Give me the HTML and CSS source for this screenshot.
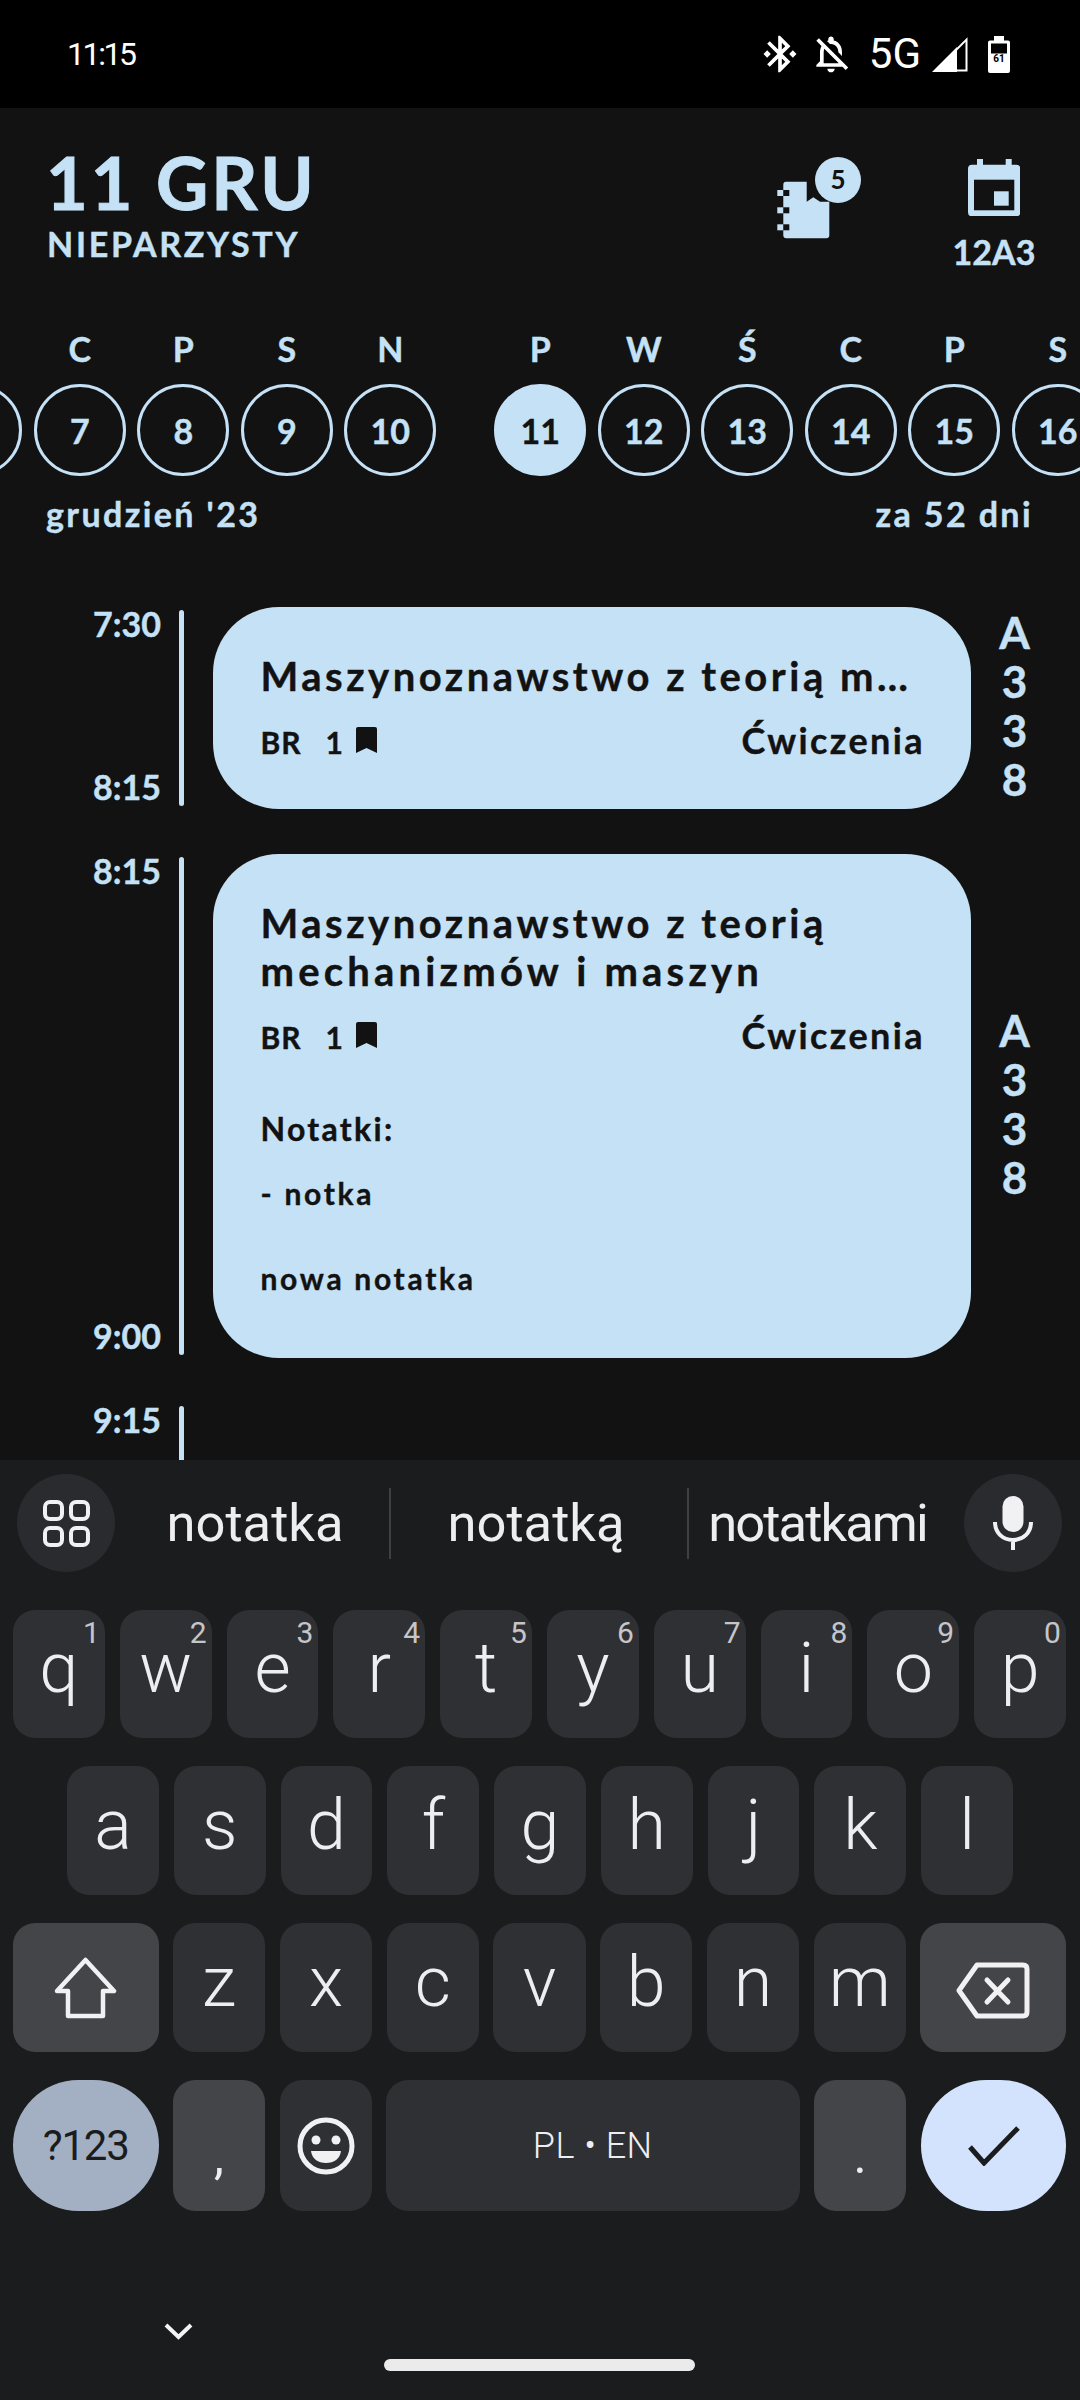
FILE: index.html
```html
<!DOCTYPE html>
<html lang="pl">
<head>
<meta charset="utf-8">
<title>Plan zajęć</title>
<link rel="stylesheet" href="styles.css">
</head>
<body>
<div class="status">
  <span class="clock">11:15</span>
  <div class="status-icons">
    <svg class="s-bt" viewBox="0 0 24 24"><path d="M7 12l-2-2-2 2 2 2 2-2zm10.71-4.29L12 2h-1v7.59L6.41 5 5 6.41 10.59 12 5 17.59 6.41 19 11 14.41V22h1l5.71-5.71-4.3-4.29 4.3-4.29zM13 5.83l1.88 1.88L13 9.59V5.83zm1.88 10.46L13 18.17v-3.76l1.88 1.88zM19 10l-2 2 2 2 2-2-2-2z"/></svg>
    <svg class="s-bell" viewBox="0 0 24 24"><path d="M12 22c1.1 0 2-.9 2-2h-4c0 1.1.9 2 2 2zm0-15.5c2.49 0 4 2.02 4 4.5v.1l2 2V11c0-3.07-1.63-5.64-4.5-6.32V4c0-.83-.67-1.5-1.5-1.5s-1.5.67-1.5 1.5v.68c-.24.06-.47.15-.69.23l1.64 1.64c.18-.02.36-.05.55-.05zM5.41 3.35L4 4.76l2.81 2.81C6.29 8.57 6 9.74 6 11v5l-2 2v1h14.24l1.74 1.74 1.41-1.41L5.41 3.35zM16 17H8v-6c0-.68.12-1.32.34-1.9L16 16.76V17z"/></svg>
    <span class="net">5G</span>
    <svg class="s-sig" viewBox="0 0 36 36"><path d="M0 36L25 11V36Z"/><path class="hollow" d="M34.5 3.6V34.5H3.6Z"/></svg>
    <svg class="s-bat" viewBox="0 0 22 37"><path d="M6 0H16V4.5H20Q22 4.5 22 6.500V35Q22 37 20 37H2Q0 37 0 35V6.500Q0 4.500 2 4.500H6Z"/><rect class="bat-hole" x="3" y="7.500" width="16" height="10"/><text class="bat-text" x="11" y="26">61</text></svg>
  </div>
</div>

<main class="app">
  <header class="head">
    <div class="head-left">
      <div class="date">11 GRU</div>
      <div class="parity">NIEPARZYSTY</div>
    </div>
    <svg class="notebook" viewBox="0 0 84 82">
      <path class="fill-l" d="M9 24.700H29.700V44.700L36.300 40.300L43 44.700H52.300V78.300Q52.300 81.300 49.300 81.300H9.300Q6.300 81.300 6.300 78.300V27.700Q6.300 24.700 9 24.700Z"/>
      <rect class="fill-l" x="0.300" y="33" width="6" height="6"/><rect class="fill-d" x="6.300" y="33" width="6" height="6"/>
      <rect class="fill-l" x="0.300" y="50.300" width="6" height="6"/><rect class="fill-d" x="6.300" y="50.300" width="6" height="6"/>
      <rect class="fill-l" x="0.300" y="67.300" width="6" height="6"/><rect class="fill-d" x="6.300" y="67.300" width="6" height="6"/>
      <circle class="fill-l" cx="61" cy="23" r="23"/>
      <text class="badge-num" x="61" y="32">5</text>
    </svg>
    <div class="plan">
      <svg class="cal" viewBox="0 0 52.300 57.300"><path class="fill-l" d="M9 0H15V5.700H37.700V0H43.700V5.700H48.300Q52.300 5.700 52.300 9.700V53.300Q52.300 57.300 48.300 57.300H4Q0 57.300 0 53.300V9.700Q0 5.700 4 5.700H9Z"/><rect class="fill-d" x="6" y="20.700" width="40.300" height="30.600"/><rect class="fill-l" x="26" y="32.300" width="14.700" height="14.400"/></svg>
      <div class="plan-name">12A3</div>
    </div>
  </header>

  <section class="strip">
    <div class="day"><span class="dl"></span><span class="dn"></span></div>
    <div class="day"><span class="dl">C</span><span class="dn">7</span></div>
    <div class="day"><span class="dl">P</span><span class="dn">8</span></div>
    <div class="day"><span class="dl">S</span><span class="dn">9</span></div>
    <div class="day week-end"><span class="dl">N</span><span class="dn">10</span></div>
    <div class="day"><span class="dl">P</span><span class="dn today">11</span></div>
    <div class="day"><span class="dl">W</span><span class="dn">12</span></div>
    <div class="day"><span class="dl">Ś</span><span class="dn">13</span></div>
    <div class="day"><span class="dl">C</span><span class="dn">14</span></div>
    <div class="day"><span class="dl">P</span><span class="dn">15</span></div>
    <div class="day"><span class="dl">S</span><span class="dn">16</span></div>
  </section>
  <div class="caption"><span>grudzień '23</span><span>za 52 dni</span></div>

  <section class="schedule">
    <div class="row">
      <div class="times"><span>7:30</span><span>8:15</span></div>
      <div class="rule"></div>
      <div class="card">
        <div class="title">Maszynoznawstwo z teorią m…</div>
        <div class="meta"><span class="tag">BR</span><span class="tag num">1</span><svg class="mark" viewBox="0 0 21 26"><path d="M2 0H19Q21 0 21 2V26L10.500 21L0 26V2Q0 0 2 0Z"/></svg><span class="kind">Ćwiczenia</span></div>
      </div>
      <div class="room">A<br>3<br>3<br>8</div>
    </div>
    <div class="row">
      <div class="times"><span>8:15</span><span>9:00</span></div>
      <div class="rule"></div>
      <div class="card card-open">
        <div class="title">Maszynoznawstwo z teorią<br><span class="title-wide">mechanizmów i maszyn</span></div>
        <div class="meta"><span class="tag">BR</span><span class="tag num">1</span><svg class="mark" viewBox="0 0 21 26"><path d="M2 0H19Q21 0 21 2V26L10.500 21L0 26V2Q0 0 2 0Z"/></svg><span class="kind">Ćwiczenia</span></div>
        <div class="notes-head">Notatki:</div>
        <div class="note first">- notka</div>
        <div class="note second">nowa notatka</div>
      </div>
      <div class="room">A<br>3<br>3<br>8</div>
    </div>
    <div class="row row-next">
      <div class="times"><span>9:15</span></div>
      <div class="rule"></div>
    </div>
  </section>
</main>

<div class="keyboard">
  <div class="suggest">
    <div class="round"><svg class="grid-ic" viewBox="0 0 47 47"><rect x="2" y="2" width="17" height="17" rx="5"/><rect x="28" y="2" width="17" height="17" rx="5"/><rect x="2" y="28" width="17" height="17" rx="5"/><rect x="28" y="28" width="17" height="17" rx="5"/></svg></div>
    <div class="word w1">notatka</div>
    <div class="word w2">notatką</div>
    <div class="word w3">notatkami</div>
    <div class="round"><svg class="mic-ic" viewBox="0 0 40 54"><rect class="mic-body" x="9.500" y="0" width="21" height="36" rx="10.500"/><path d="M2 26C2 37 10 44 20 44S38 37 38 26M20 44V54"/></svg></div>
  </div>
  <div class="krow r1">
    <div class="key">q<sup class="hint">1</sup></div><div class="key">w<sup class="hint">2</sup></div><div class="key">e<sup class="hint">3</sup></div><div class="key">r<sup class="hint">4</sup></div><div class="key">t<sup class="hint">5</sup></div><div class="key">y<sup class="hint">6</sup></div><div class="key">u<sup class="hint">7</sup></div><div class="key">i<sup class="hint">8</sup></div><div class="key">o<sup class="hint">9</sup></div><div class="key">p<sup class="hint">0</sup></div>
  </div>
  <div class="krow r2">
    <div class="key">a</div><div class="key">s</div><div class="key">d</div><div class="key">f</div><div class="key">g</div><div class="key">h</div><div class="key">j</div><div class="key">k</div><div class="key">l</div>
  </div>
  <div class="krow r3">
    <div class="key wide alt"><svg class="shift-ic" viewBox="0 0 63 62"><path d="M31.500 3L60 34H49V59H14V34H3Z"/></svg></div>
    <div class="key">z</div><div class="key">x</div><div class="key">c</div><div class="key">v</div><div class="key">b</div><div class="key">n</div><div class="key">m</div>
    <div class="key wide alt"><svg class="del-ic" viewBox="0 0 74 57"><path d="M21 3H67Q71 3 71 7V50Q71 54 67 54H21L3 28.500Z"/><path d="M31 18L52 40M52 18L31 40"/></svg></div>
  </div>
  <div class="krow r4">
    <div class="key wide pill sym">?123</div>
    <div class="key alt punct">,</div>
    <div class="key fixed"><svg class="emoji-ic" viewBox="0 0 58 58"><circle class="face" cx="29" cy="29" r="26"/><circle cx="19" cy="23" r="4.500"/><circle cx="39" cy="23" r="4.500"/><path d="M14 34H44C43 42 37 46 29 46S15 42 14 34Z"/></svg></div>
    <div class="key space">PL • EN</div>
    <div class="key alt punct">.</div>
    <div class="key wide pill enter"><svg class="check-ic" viewBox="0 0 52 40"><path d="M2 21L16 37L50 2"/></svg></div>
  </div>
  <svg class="chev" viewBox="0 0 29 17"><path d="M2 2L14.500 14L27 2"/></svg>
  <div class="home"></div>
</div>
</body>
</html>
```
FILE: styles.css
```css
* { box-sizing: border-box; }
html, body { margin: 0; padding: 0; }
body {
  width: 1080px;
  height: 2400px;
  overflow: hidden;
  background: #121212;
  font-family: "Lato", "Noto Sans", sans-serif;
  font-weight: 700;
  color: #c5e1f6;
}

/* status bar */
.status {
  height: 108px;
  background: #000;
  color: #fff;
  display: flex;
  justify-content: space-between;
  align-items: center;
  font-family: "Roboto", sans-serif;
  font-weight: 400;
  padding: 0 70px 0 67px;
}
.clock { font-size: 32px; letter-spacing: -2.400px; line-height: 1; }
.status-icons { display: flex; align-items: center; }
.status-icons svg { fill: #fff; display: block; }
.s-bt { width: 44px; height: 44px; margin-right: 7px; }
.s-bell { width: 44px; height: 44px; margin-right: 16px; }
.net { font-size: 42px; line-height: 1; margin-right: 11px; }
.s-sig { width: 36px; height: 36px; margin-right: 20px; }
.status-icons .hollow { fill: none; stroke: #fff; stroke-width: 2; }
.s-bat { width: 22px; height: 37px; }
.status-icons .bat-hole { fill: #000; }
.bat-text { font-size: 10px; fill: #000; text-anchor: middle; font-family: "Roboto", sans-serif; font-weight: 700; }

/* header */
.app { height: 1352px; overflow: hidden; -webkit-text-stroke: .4px currentColor; }
.head { display: flex; align-items: flex-start; padding: 44px 41px 0 46px; }
.head-left { flex: 1; }
.date { font-size: 72px; line-height: 60px; letter-spacing: 3px; -webkit-text-stroke: 1px currentColor; }
.parity { font-size: 34px; line-height: 64px; letter-spacing: 2.700px; margin-left: 1px; }
.fill-l { fill: #c5e1f6; }
.fill-d { fill: #121212; }
.notebook { width: 84px; height: 82px; margin: 5px 88px 0 0; display: block; }
.badge-num { font-size: 26px; font-weight: 700; fill: #121212; text-anchor: middle; }
.plan { width: 90px; display: flex; flex-direction: column; align-items: center; padding-top: 7px; }
.cal { width: 52.300px; height: 57.300px; display: block; }
.plan-name { font-size: 34px; line-height: 40px; margin-top: 16px; white-space: nowrap; }

/* day strip */
.strip { display: flex; gap: 11.500px; margin: 53px 0 0 -69.700px; width: 1180px; }
.day { width: 92px; flex: none; display: flex; flex-direction: column; align-items: center; }
.week-end { margin-right: 46.500px; }
.dl { font-size: 34px; line-height: 40px; min-height: 40px; margin-bottom: 15px; }
.dn {
  width: 92px;
  height: 92px;
  border: 3.500px solid #c5e1f6;
  border-radius: 50%;
  display: flex;
  align-items: center;
  justify-content: center;
  font-size: 34px;
}
.today { background: #c5e1f6; color: #121212; }
.caption {
  display: flex;
  justify-content: space-between;
  padding: 0 47px 0 46px;
  margin-top: 18px;
  font-size: 34px;
  line-height: 40px;
  letter-spacing: 2.400px;
}

/* schedule */
.schedule { margin-top: 73px; display: flex; flex-direction: column; gap: 45.500px; }
.row { display: flex; align-items: stretch; }
.row-next { min-height: 120px; }
.times {
  width: 161px;
  flex: none;
  display: flex;
  flex-direction: column;
  justify-content: space-between;
  align-items: flex-end;
  font-size: 34px;
  line-height: 34px;
  padding-bottom: 5px;
}
.rule { width: 5px; flex: none; margin: 3px 0 3px 18px; background: #c5e1f6; border-radius: 3px; }
.card {
  width: 758px;
  flex: none;
  margin-left: 29px;
  background: #c5e1f6;
  color: #121212;
  border-radius: 66px;
  padding: 45px 49px 46.500px 47.500px;
}
.card-open { padding-bottom: 60px; }
.title { font-size: 40px; line-height: 48px; letter-spacing: 3.500px; white-space: nowrap; }
.title-wide { letter-spacing: 4.200px; }
.meta { display: flex; align-items: baseline; margin-top: 18px; font-size: 30px; line-height: 44px; height: 44px; }
.tag { letter-spacing: 1px; }
.num { margin-left: 24px; }
.mark { width: 21px; height: 26px; fill: #121212; margin-left: 12px; align-self: center; display: block; }
.kind { margin-left: auto; font-size: 36px; letter-spacing: 2.400px; margin-right: -3px; }
.notes-head { font-size: 32px; line-height: 40px; margin-top: 51.500px; letter-spacing: 2.300px; }
.note { font-size: 30px; line-height: 40px; letter-spacing: 2.700px; }
.note.first { margin-top: 24px; }
.note.second { margin-top: 45px; }
.room { flex: 1; align-self: center; text-align: center; font-size: 44px; line-height: 49px; padding: 0 22px 4px 0; }

/* keyboard */
.keyboard {
  height: 940px;
  background: #1b1c1e;
  padding: 14px 14px 0 13px;
  color: #eeeef2;
  font-family: "Roboto", sans-serif;
  font-weight: 400;
}
.suggest { display: flex; height: 98px; margin: 0 5px 38px 4px; }
.round {
  width: 98px;
  height: 98px;
  flex: none;
  border-radius: 50%;
  background: #2a2b2f;
  display: flex;
  align-items: center;
  justify-content: center;
}
.grid-ic { width: 47px; height: 47px; fill: none; stroke: #f1f1f4; stroke-width: 4; }
.mic-ic { width: 40px; height: 54px; fill: none; stroke: #f1f1f4; stroke-width: 4; }
.mic-ic .mic-body { fill: #f1f1f4; stroke: none; }
.word {
  height: 98px;
  flex: none;
  display: flex;
  align-items: center;
  justify-content: center;
  font-size: 52.500px;
  line-height: 1;
}
.w1 { width: 274px; padding-left: 6px; }
.w2 { width: 298px; padding-right: 6px; border-left: 2px solid #3f4043; border-image: linear-gradient(#1b1c1e 15px, #3f4043 15px, #3f4043 84px, #1b1c1e 84px) 1; }
.w3 { width: 277px; padding-right: 18px; letter-spacing: -1.900px; border-left: 2px solid #3f4043; border-image: linear-gradient(#1b1c1e 15px, #3f4043 15px, #3f4043 84px, #1b1c1e 84px) 1; }
.krow { display: flex; gap: 15px; margin-bottom: 28px; }
.r1 { height: 128px; }
.r2 { height: 129px; padding: 0 53px 0 54px; }
.r3 { height: 129px; gap: 14.500px; }
.r4 { height: 131px; margin-bottom: 0; gap: 14.500px; }
.key {
  flex: 1 1 0;
  position: relative;
  background: #2f3034;
  border-radius: 22px;
  display: flex;
  align-items: center;
  justify-content: center;
  font-size: 70px;
  font-weight: 300;
  line-height: 1;
  padding-bottom: 12px;
}
.hint {
  position: absolute;
  top: 8px;
  right: 5px;
  font-size: 30px;
  line-height: 30px;
  font-weight: 400;
  color: #c6c6ca;
  vertical-align: baseline;
}
.wide { flex: 0 0 145.500px; padding-bottom: 0; }
.alt { background: #444549; }
.fixed { flex: 0 0 92px; padding-bottom: 0; }
.space { flex: 1 1 0; font-size: 36px; font-weight: 300; letter-spacing: .5px; padding-bottom: 0; }
.pill { border-radius: 66px; padding-bottom: 0; }
.sym { background: #a3b0c4; color: #1b1c1e; font-size: 42px; font-weight: 400; letter-spacing: -1.200px; }
.enter { background: #d3e3fd; }
.punct { flex: 0 0 92px; font-size: 50px; font-weight: 400; padding: 20px 0 0; }
.shift-ic { width: 63px; height: 62px; fill: none; stroke: #f1f1f4; stroke-width: 4.500; stroke-linejoin: round; }
.del-ic { width: 74px; height: 57px; margin-top: 5px; fill: none; stroke: #f1f1f4; stroke-width: 5; stroke-linejoin: round; stroke-linecap: round; }
.emoji-ic { width: 58px; height: 58px; fill: #f1f1f4; }
.emoji-ic .face { fill: none; stroke: #f1f1f4; stroke-width: 5; }
.check-ic { width: 52px; height: 40px; margin-left: 2px; fill: none; stroke: #1b1c1e; stroke-width: 5; }
.chev { display: block; width: 29px; height: 17px; margin: 112px 0 0 151px; fill: none; stroke: #f4f4f4; stroke-width: 4; }
.home { width: 311px; height: 12px; margin: 19px auto 0; background: #ebebeb; border-radius: 6px; }
```
